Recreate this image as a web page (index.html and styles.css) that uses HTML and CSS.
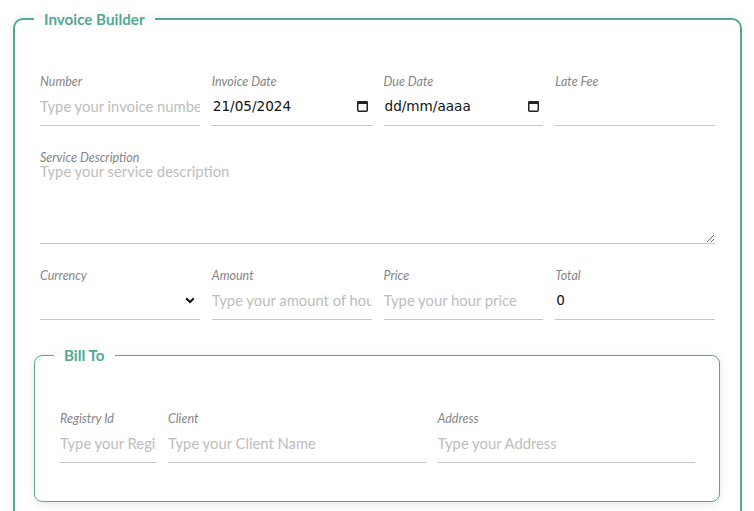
FILE: index.html
```html
<!DOCTYPE html>
<html lang="en">
<head>
<meta charset="utf-8">
<title>Invoice Builder</title>
<link rel="stylesheet" href="styles.css">
</head>
<body>
<form class="page">
  <fieldset class="box box-main">
    <legend class="box-title">Invoice Builder</legend>

    <div class="grid grid-4">
      <div class="field">
        <label class="label">Number</label>
        <input class="input" type="text" placeholder="Type your invoice number">
      </div>
      <div class="field">
        <label class="label">Invoice Date</label>
        <div class="input input-date">
          <span class="date-text">21/05/2024</span>
          <svg class="cal" width="11" height="12" viewBox="0 0 11 12"><rect x="0.75" y="1.75" width="9.5" height="9.5" rx="1" fill="none" stroke="#222" stroke-width="1.5"/><rect x="0.5" y="1" width="10" height="3" fill="#222"/></svg>
        </div>
      </div>
      <div class="field">
        <label class="label">Due Date</label>
        <div class="input input-date">
          <span class="date-text">dd/mm/aaaa</span>
          <svg class="cal" width="11" height="12" viewBox="0 0 11 12"><rect x="0.75" y="1.75" width="9.5" height="9.5" rx="1" fill="none" stroke="#222" stroke-width="1.5"/><rect x="0.5" y="1" width="10" height="3" fill="#222"/></svg>
        </div>
      </div>
      <div class="field">
        <label class="label">Late Fee</label>
        <input class="input" type="text">
      </div>
    </div>

    <div class="field">
      <label class="label">Service Description</label>
      <textarea class="textarea" placeholder="Type your service description"></textarea>
    </div>

    <div class="grid grid-4">
      <div class="field">
        <label class="label">Currency</label>
        <div class="input input-select">
          <svg class="chev" width="10" height="7" viewBox="0 0 10 7"><path d="M1.2 1.2 L5 5 L8.8 1.2" fill="none" stroke="#111" stroke-width="2"/></svg>
        </div>
      </div>
      <div class="field">
        <label class="label">Amount</label>
        <input class="input" type="text" placeholder="Type your amount of hours">
      </div>
      <div class="field">
        <label class="label">Price</label>
        <input class="input" type="text" placeholder="Type your hour price">
      </div>
      <div class="field">
        <label class="label">Total</label>
        <input class="input input-value" type="text" value="0">
      </div>
    </div>

    <fieldset class="box box-sub">
      <legend class="box-title">Bill To</legend>
      <div class="grid grid-bill">
        <div class="field">
          <label class="label">Registry Id</label>
          <input class="input" type="text" placeholder="Type your Registry Id">
        </div>
        <div class="field">
          <label class="label">Client</label>
          <input class="input" type="text" placeholder="Type your Client Name">
        </div>
        <div class="field">
          <label class="label">Address</label>
          <input class="input" type="text" placeholder="Type your Address">
        </div>
      </div>
    </fieldset>
  </fieldset>
</form>
</body>
</html>
```

FILE: styles.css
```css
html, body {
  margin: 0;
  padding: 0;
  background: #ffffff;
}

body {
  font-family: Lato, "Noto Sans", sans-serif;
  color: #222;
}

.page {
  padding: 9px 12px 40px 13px;
}

.box {
  margin: 0;
  min-width: 0;
  border: 2px solid #52a895;
  border-radius: 10px;
  box-shadow: 0 0 10px rgba(0, 0, 0, 0.08);
  background: #fff;
}

.box-main {
  padding: 44px 25px 60px 25px;
  display: flex;
  flex-direction: column;
  gap: 23px;
}

.box-sub {
  border-width: 1px;
  border-radius: 8px;
  padding: 45px 24px 38px 25px;
  margin: 2px -5px 0 -6px;
  box-shadow: 0 2px 8px rgba(0, 0, 0, 0.10);
}

.box-title {
  margin-left: -6px;
  padding: 0 10px;
  font-family: Lato, "Noto Sans", sans-serif;
  font-weight: 700;
  font-size: 15.2px;
  line-height: 20px;
  color: #52a895;
}

.grid {
  display: grid;
  column-gap: 12px;
}

.grid-4 {
  grid-template-columns: repeat(4, 1fr);
}

.grid-bill {
  grid-template-columns: 96px 1fr 1fr;
}

.field {
  display: flex;
  flex-direction: column;
  min-width: 0;
}

.label {
  padding-top: 1px;
  font-family: Lato, "Noto Sans", sans-serif;
  font-style: italic;
  font-size: 12.5px;
  line-height: 16px;
  color: #858585;
}

.input {
  box-sizing: border-box;
  width: 100%;
  height: 36px;
  margin: 0;
  padding: 0 0 3px 0;
  border: none;
  border-bottom: 1px solid #c6c6c6;
  background: transparent;
  outline: none;
  font-family: Lato, "Noto Sans", sans-serif;
  font-size: 14.8px;
  color: #111;
}

.input::placeholder {
  color: #bdbdbd;
}

.input-date {
  display: flex;
  align-items: center;
  justify-content: space-between;
  padding: 0 4px 3px 1px;
}

.date-text {
  font-family: "DejaVu Sans", sans-serif;
  font-size: 13.6px;
  color: #111;
}

.input-select {
  display: flex;
  align-items: center;
  justify-content: flex-end;
  padding: 0 5px 3px 0;
}

.input-value {
  font-family: "DejaVu Sans", sans-serif;
  font-size: 13.6px;
  padding-left: 1px;
}

.textarea {
  box-sizing: border-box;
  width: 100%;
  height: 82px;
  margin: -4px 0 0 0;
  padding: 0;
  border: none;
  border-bottom: 1px solid #c6c6c6;
  background: transparent;
  outline: none;
  resize: vertical;
  font-family: Lato, "Noto Sans", sans-serif;
  font-size: 14.8px;
  line-height: 18px;
  color: #111;
}

.textarea::placeholder {
  color: #bdbdbd;
}
```
